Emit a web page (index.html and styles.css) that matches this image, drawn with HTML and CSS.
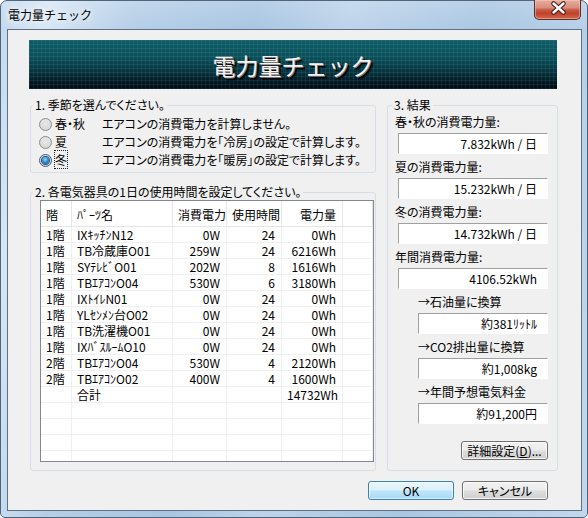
FILE: index.html
```html
<!DOCTYPE html>
<html lang="ja">
<head>
<meta charset="utf-8">
<title>電力量チェック</title>
<link rel="stylesheet" href="styles.css">
</head>
<body>
<div class="window">
  <div class="titlebar">
    <span class="title">電力量チェック</span>
    <div class="close">
      <svg width="47" height="20" viewBox="0 0 47 20">
        <path d="M19.5 4.5 L29.5 13.5 M29.5 4.5 L19.5 13.5" stroke="#4a1e18" stroke-width="4.6" stroke-linecap="round" fill="none"/>
        <path d="M19.5 4.5 L29.5 13.5 M29.5 4.5 L19.5 13.5" stroke="#ffffff" stroke-width="2.4" stroke-linecap="round" fill="none"/>
      </svg>
    </div>
  </div>
  <div class="client">
    <div class="banner"><span class="banner-text">電力量チェック</span></div>
    <div class="main">
      <div class="left">
        <fieldset class="group g1">
          <legend>1. 季節を選んでください。</legend>
          <div class="season"><span class="radio"></span><span class="sname">春・秋</span><span class="sdesc">エアコンの消費電力を計算しません。</span></div>
          <div class="season"><span class="radio"></span><span class="sname">夏</span><span class="sdesc">エアコンの消費電力を「冷房」の設定で計算します。</span></div>
          <div class="season"><span class="radio on"></span><span class="sname"><span class="focus">冬</span></span><span class="sdesc">エアコンの消費電力を「暖房」の設定で計算します。</span></div>
        </fieldset>
        <fieldset class="group g2">
          <legend>2. 各電気器具の1日の使用時間を設定してください。</legend>
          <div class="listview">
            <div class="lv-row lv-head"><span>階</span><span>ﾊﾟｰﾂ名</span><span class="r">消費電力</span><span class="r">使用時間</span><span class="r">電力量</span><span></span></div>
            <div class="lv-row"><span>1階</span><span>IXｷｯﾁﾝN12</span><span class="r">0W</span><span class="r">24</span><span class="r">0Wh</span><span></span></div>
            <div class="lv-row"><span>1階</span><span>TB冷蔵庫O01</span><span class="r">259W</span><span class="r">24</span><span class="r">6216Wh</span><span></span></div>
            <div class="lv-row"><span>1階</span><span>SYﾃﾚﾋﾞO01</span><span class="r">202W</span><span class="r">8</span><span class="r">1616Wh</span><span></span></div>
            <div class="lv-row"><span>1階</span><span>TBｴｱｺﾝO04</span><span class="r">530W</span><span class="r">6</span><span class="r">3180Wh</span><span></span></div>
            <div class="lv-row"><span>1階</span><span>IXﾄｲﾚN01</span><span class="r">0W</span><span class="r">24</span><span class="r">0Wh</span><span></span></div>
            <div class="lv-row"><span>1階</span><span>YLｾﾝﾒﾝ台O02</span><span class="r">0W</span><span class="r">24</span><span class="r">0Wh</span><span></span></div>
            <div class="lv-row"><span>1階</span><span>TB洗濯機O01</span><span class="r">0W</span><span class="r">24</span><span class="r">0Wh</span><span></span></div>
            <div class="lv-row"><span>1階</span><span>IXﾊﾞｽﾙｰﾑO10</span><span class="r">0W</span><span class="r">24</span><span class="r">0Wh</span><span></span></div>
            <div class="lv-row"><span>2階</span><span>TBｴｱｺﾝO04</span><span class="r">530W</span><span class="r">4</span><span class="r">2120Wh</span><span></span></div>
            <div class="lv-row"><span>2階</span><span>TBｴｱｺﾝO02</span><span class="r">400W</span><span class="r">4</span><span class="r">1600Wh</span><span></span></div>
            <div class="lv-row"><span></span><span>合計</span><span class="r"></span><span class="r"></span><span class="r">14732Wh</span><span></span></div>
            <div class="lv-row"><span></span><span></span><span></span><span></span><span></span><span></span></div>
            <div class="lv-row"><span></span><span></span><span></span><span></span><span></span><span></span></div>
            <div class="lv-row"><span></span><span></span><span></span><span></span><span></span><span></span></div>
            <div class="lv-row"><span></span><span></span><span></span><span></span><span></span><span></span></div>
          </div>
        </fieldset>
      </div>
      <fieldset class="group g3">
        <legend>3. 結果</legend>
        <div class="rlabel">春・秋の消費電力量:</div>
        <div class="rbox">7.832kWh / 日</div>
        <div class="rlabel">夏の消費電力量:</div>
        <div class="rbox">15.232kWh / 日</div>
        <div class="rlabel">冬の消費電力量:</div>
        <div class="rbox">14.732kWh / 日</div>
        <div class="rlabel">年間消費電力量:</div>
        <div class="rbox">4106.52kWh</div>
        <div class="rlabel sub">→石油量に換算</div>
        <div class="rbox sub">約381ﾘｯﾄﾙ</div>
        <div class="rlabel sub">→CO2排出量に換算</div>
        <div class="rbox sub">約1,008kg</div>
        <div class="rlabel sub">→年間予想電気料金</div>
        <div class="rbox sub">約91,200円</div>
        <div class="detail-row"><button class="btn">詳細設定(<u>D</u>)...</button></div>
      </fieldset>
    </div>
    <div class="buttons">
      <button class="btn default">OK</button>
      <button class="btn">キャンセル</button>
    </div>
  </div>
</div>
</body>
</html>
```
FILE: styles.css
```css
html, body {
  margin: 0;
  padding: 0;
}
body {
  width: 588px;
  height: 518px;
  overflow: hidden;
  background: #ffffff;
  font-family: "Noto Sans CJK JP", "Noto Sans", sans-serif;
  font-size: 12px;
  color: #000;
  font-feature-settings: "palt";
}
.window {
  box-sizing: border-box;
  width: 588px;
  height: 518px;
  border: 1px solid #50657c;
  border-radius: 7px 7px 5px 5px;
  background:
    linear-gradient(180deg, rgba(255,255,255,0.18) 0%, rgba(255,255,255,0) 30px),
    linear-gradient(100deg, #c3d8ed 0%, #d7e6f5 7%, #b5cee7 20%, #a8c5e2 38%, #bcd3ea 52%, #a9c6e2 72%, #c2d7ed 100%);
  display: flex;
  flex-direction: column;
}
.titlebar {
  height: 28px;
  display: flex;
  justify-content: space-between;
  align-items: flex-start;
}
.title {
  margin: 6px 0 0 7px;
  line-height: 16px;
  font-size: 12px;
  font-feature-settings: normal;
  text-shadow: 0 0 6px #fff, 0 0 10px rgba(255,255,255,0.9);
}
.close {
  box-sizing: border-box;
  width: 47px;
  height: 20px;
  margin: -1px 6px 0 0;
  border: 1px solid #5b2e28;
  border-top: none;
  border-radius: 0 0 5px 5px;
  background: linear-gradient(180deg, #e7ada0 0%, #d88e7f 40%, #c75a45 52%, #c0412a 70%, #d2684e 100%);
  box-shadow: inset 0 0 0 1px rgba(255,210,200,0.45);
}
.close svg {
  display: block;
  margin: -1px 0 0 -1px;
}
.client {
  flex: 1;
  margin: 0 5px 6px 6px;
  border: 1px solid #5f7185;
  background: #f0f0f0;
  display: flex;
  flex-direction: column;
}
.banner {
  margin: 10px 0 0 21px;
  width: 528px;
  height: 49px;
  display: flex;
  align-items: center;
  justify-content: center;
  background-image:
    repeating-linear-gradient(0deg, rgba(120,200,210,0.10) 0 1px, rgba(0,0,0,0) 1px 4px),
    repeating-linear-gradient(90deg, rgba(120,200,210,0.10) 0 1px, rgba(0,0,0,0) 1px 4px),
    linear-gradient(180deg, #0e5c66 0%, #0b4f59 35%, #07333d 65%, #031520 88%, #010a12 100%);
}
.banner-text {
  font-size: 23px;
  font-weight: 400;
  line-height: 28px;
  color: #f4f4f4;
  font-feature-settings: normal;
  letter-spacing: 0px;
  text-shadow: 1px 1px 0 #7a7a7a, 2px 2px 0 #000, 3px 3px 1px rgba(0,0,0,0.6);
  margin-top: 1px;
}
.main {
  display: flex;
  gap: 11px;
  margin: 9px 0 0 22px;
}
.left {
  width: 346px;
  display: flex;
  flex-direction: column;
}
.group {
  box-sizing: border-box;
  margin: 0;
  padding: 0;
  min-width: 0;
  border: 1px solid #d5dfe5;
  border-radius: 3px;
}
.group legend {
  margin-left: 2px;
  padding: 0 2px;
  line-height: 14px;
  font-size: 12px;
}
.g1 {
  width: 346px;
  padding: 3px 0 3px 0;
}
.season {
  display: flex;
  align-items: center;
  height: 18px;
  padding-left: 8px;
}
.radio {
  box-sizing: border-box;
  width: 13px;
  height: 13px;
  border-radius: 50%;
  border: 1px solid #8c8c8c;
  background: radial-gradient(circle at 50% 40%, #f4f4f4 0%, #dcdcdc 60%, #cfcfcf 100%);
  display: flex;
  align-items: center;
  justify-content: center;
  flex: none;
}
.radio::after {
  content: "";
  width: 7px;
  height: 7px;
  border-radius: 50%;
  background: radial-gradient(circle at 50% 45%, #eaeaea 0%, #d4d4d4 100%);
}
.radio.on {
  border-color: #3d5d7e;
}
.radio.on::after {
  background: radial-gradient(circle at 45% 35%, #9fd7f7 0%, #2f8fd2 45%, #0b4a84 100%);
  box-shadow: 0 0 0 1px #1d4f7c;
}
.sname {
  width: 47px;
  margin-left: 3px;
  line-height: 16px;
}
.focus {
  outline: 1px dotted #222;
  outline-offset: 0;
}
.sdesc {
  line-height: 16px;
}
.g2 {
  width: 346px;
  margin-top: 12px;
  padding: 1px 0 8px 0;
}
.listview {
  box-sizing: border-box;
  margin-left: 9px;
  width: 334px;
  height: 262px;
  border: 1px solid #828790;
  background: #fff;
  overflow: hidden;
}
.lv-row {
  box-sizing: border-box;
  display: grid;
  grid-template-columns: 31px 101px 54px 55px 61px 1fr;
  height: 16px;
  border-bottom: 1px solid #f0f0f0;
  font-feature-settings: normal;
}
.lv-row span {
  box-sizing: border-box;
  border-right: 1px solid #f0f0f0;
  padding: 0 5px 0 5px;
  line-height: 16px;
  white-space: nowrap;
  overflow: hidden;
}
.lv-row span.r {
  text-align: right;
  padding-right: 6px;
}
.lv-row.lv-head {
  height: 26px;
  border-bottom: 1px solid #e5e5e5;
}
.lv-head span {
  border-right: 1px solid #e5e5e5;
  line-height: 25px;
  padding-top: 1px;
}
.g3 {
  width: 171px;
  padding: 3px 9px 9px 7px;
  display: flex;
  flex-direction: column;
}
.g3 legend {
  margin-left: -3px;
}
.rlabel {
  line-height: 14px;
  height: 14px;
  margin-bottom: 4px;
  white-space: nowrap;
}
.rlabel.sub {
  margin-left: 23px;
}
.rbox {
  box-sizing: border-box;
  height: 21px;
  margin: 0 0 6px 3px;
  background: #fff;
  border-top: 1px solid #a0a0a0;
  border-left: 1px solid #a0a0a0;
  border-right: 1px solid #ffffff;
  border-bottom: 1px solid #ffffff;
  text-align: right;
  padding-right: 10px;
  line-height: 19px;
  white-space: nowrap;
}
.rbox.sub {
  margin-left: 23px;
}
.detail-row {
  display: flex;
  justify-content: flex-end;
  margin-top: 11px;
}
.btn {
  box-sizing: border-box;
  width: 86px;
  height: 19px;
  padding: 0;
  border: 1px solid #707070;
  border-radius: 3px;
  background: linear-gradient(180deg, #f2f2f2 0%, #ebebeb 48%, #dddddd 52%, #cfcfcf 100%);
  box-shadow: inset 0 0 0 1px rgba(255,255,255,0.75);
  font-family: "Noto Sans CJK JP", "Noto Sans", sans-serif;
  font-size: 12px;
  line-height: 16px;
  color: #000;
  font-feature-settings: "palt";
}
.detail-row .btn {
  width: 87px;
}
.btn u {
  text-underline-offset: 1px;
}
.btn.default {
  border-color: #3c7fb1;
  background: linear-gradient(180deg, #eaf6fd 0%, #d9f0fc 48%, #bee6fd 52%, #a7d9f5 100%);
  box-shadow: inset 0 0 0 1px rgba(255,255,255,0.6);
}
.buttons {
  display: flex;
  justify-content: flex-end;
  gap: 8px;
  margin-top: 10px;
  padding-right: 33px;
}
```
